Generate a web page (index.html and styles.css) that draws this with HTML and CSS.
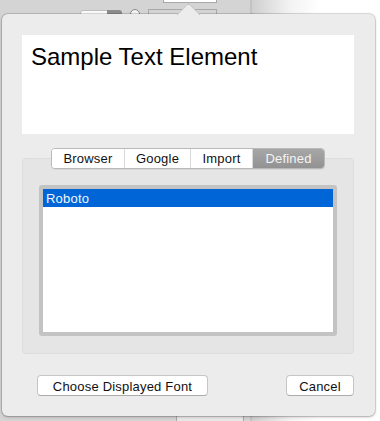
FILE: index.html
```html
<!DOCTYPE html>
<html lang="en">
<head>
  <meta charset="UTF-8">
  <title>Font Picker</title>
  <link rel="stylesheet" href="styles.css">
</head>
<body>
  <!-- window behind the popover -->
  <div class="backdrop">
    <span class="bg-field"></span>
    <span class="bg-stepper"></span>
    <span class="bg-dot"></span>
    <span class="bg-box"></span>
    <span class="bg-tab"></span>
    <span class="bg-bottom"></span>
  </div>

  <div class="popover">
    <div class="sample">Sample Text Element</div>

    <div class="source">
      <div class="tabs">
        <button class="tab">Browser</button>
        <button class="tab">Google</button>
        <button class="tab">Import</button>
        <button class="tab active">Defined</button>
      </div>
      <div class="panel">
        <ul class="font-list">
          <li class="selected">Roboto</li>
        </ul>
      </div>
    </div>

    <div class="actions">
      <button class="btn btn-choose">Choose Displayed Font</button>
      <button class="btn btn-cancel">Cancel</button>
    </div>
  </div>
</body>
</html>
```

FILE: styles.css
```css
body {
  margin: 0;
  width: 380px;
  height: 421px;
  overflow: hidden;
  position: relative;
  font-family: 'Liberation Sans', Arial, sans-serif;
  background: linear-gradient(to right, #d4d4d4 0, #d4d4d4 250px, #b4b4b4 251px, #cfcfcf 252px, #f3f3f3 290px, #ffffff 320px);
}
.backdrop span {
  position: absolute;
  display: block;
}
.bg-field {
  left: 80px;
  top: 10px;
  width: 28px;
  height: 8px;
  background: #fafafa;
  border: 1px solid #bdbdbd;
  border-radius: 3px 0 0 3px;
}
.bg-stepper {
  left: 107px;
  top: 10px;
  width: 15px;
  height: 10px;
  background: #8c8c8c;
  border-radius: 0 3px 3px 0;
}
.bg-dot {
  left: 130px;
  top: 9px;
  width: 8px;
  height: 8px;
  background: #f2f2f2;
  border: 1px solid #8a8a8a;
  border-radius: 50%;
}
.bg-box {
  left: 148px;
  top: 9px;
  width: 67px;
  height: 10px;
  border: 1px solid #a8a8a8;
}
.bg-tab {
  left: 163px;
  top: -2px;
  width: 52px;
  height: 3px;
  background: #ffffff;
  border: 1px solid #a8a8a8;
}
.bg-bottom {
  left: 176px;
  top: 414px;
  width: 66px;
  height: 12px;
  background: #e8e8e8;
  border: 1px solid #a8a8a8;
  border-radius: 3px;
}

/* popover */
.popover {
  position: absolute;
  left: 2px;
  top: 14px;
  width: 373px;
  height: 402px;
  box-sizing: border-box;
  background: #ececec;
  border-radius: 6px;
  box-shadow: 0 0 0 1px rgba(0, 0, 0, 0.12), 0 1px 3px rgba(0, 0, 0, 0.25);
  padding: 21px 21px 0 20px;
}
.popover:before {
  content: "";
  position: absolute;
  left: 178px;
  top: -8px;
  width: 16px;
  height: 16px;
  background: #ececec;
  transform: rotate(45deg);
  border-top: 1px solid #c4c4c4;
  border-left: 1px solid #c4c4c4;
  border-radius: 3px 0 0 0;
}
.sample {
  position: relative;
  background: #ffffff;
  height: 99px;
  box-sizing: border-box;
  padding: 8px 0 0 9px;
  font-size: 24px;
  line-height: 28px;
  color: #000;
}

.source {
  margin-top: 14px;
}
.tabs {
  position: relative;
  z-index: 1;
  display: flex;
  width: 274px;
  height: 21px;
  margin: 0 auto -11px;
  box-sizing: border-box;
  border: 1px solid #b9b9b9;
  border-radius: 4px;
  background: #ffffff;
  overflow: hidden;
  box-shadow: 0 1px 0 rgba(0, 0, 0, 0.05);
}
.tab {
  border: none;
  border-right: 1px solid #d9d9d9;
  background: #ffffff;
  font-family: inherit;
  font-size: 13px;
  letter-spacing: 0.2px;
  color: #111;
  padding: 0;
  height: 19px;
  line-height: 20px;
}
.tab:nth-child(1) { width: 73px; }
.tab:nth-child(2) { width: 66px; }
.tab:nth-child(3) { width: 62px; }
.tab.active {
  flex: 1;
  border-right: none;
  background: linear-gradient(#a7a7a8, #929293);
  color: #f4f4f4;
}
.panel {
  height: 196px;
  box-sizing: border-box;
  background: #e5e5e5;
  border: 1px solid #dddddd;
  border-radius: 4px;
  padding: 26px 16px 0 16px;
}
.font-list {
  list-style: none;
  margin: 0;
  padding: 0;
  height: 151px;
  box-sizing: border-box;
  background: #ffffff;
  border: 4px solid #c3c3c3;
  border-radius: 3px;
}
.font-list li {
  height: 18px;
  line-height: 20px;
  padding-left: 3px;
  font-size: 13px;
  letter-spacing: 0.2px;
  color: #000;
}
.font-list li.selected {
  background: #0066d8;
  color: #f2f6fc;
}

.actions {
  display: flex;
  justify-content: space-between;
  margin-top: 21px;
  padding: 0 0 0 15px;
}
.btn {
  height: 21px;
  box-sizing: border-box;
  background: #ffffff;
  border: 1px solid #c6c6c6;
  border-bottom-color: #ababab;
  border-radius: 4px;
  font-family: inherit;
  font-size: 13px;
  letter-spacing: 0.2px;
  color: #111;
  padding: 1px 0 0;
}
.btn-choose { width: 171px; }
.btn-cancel { width: 68px; }
```
